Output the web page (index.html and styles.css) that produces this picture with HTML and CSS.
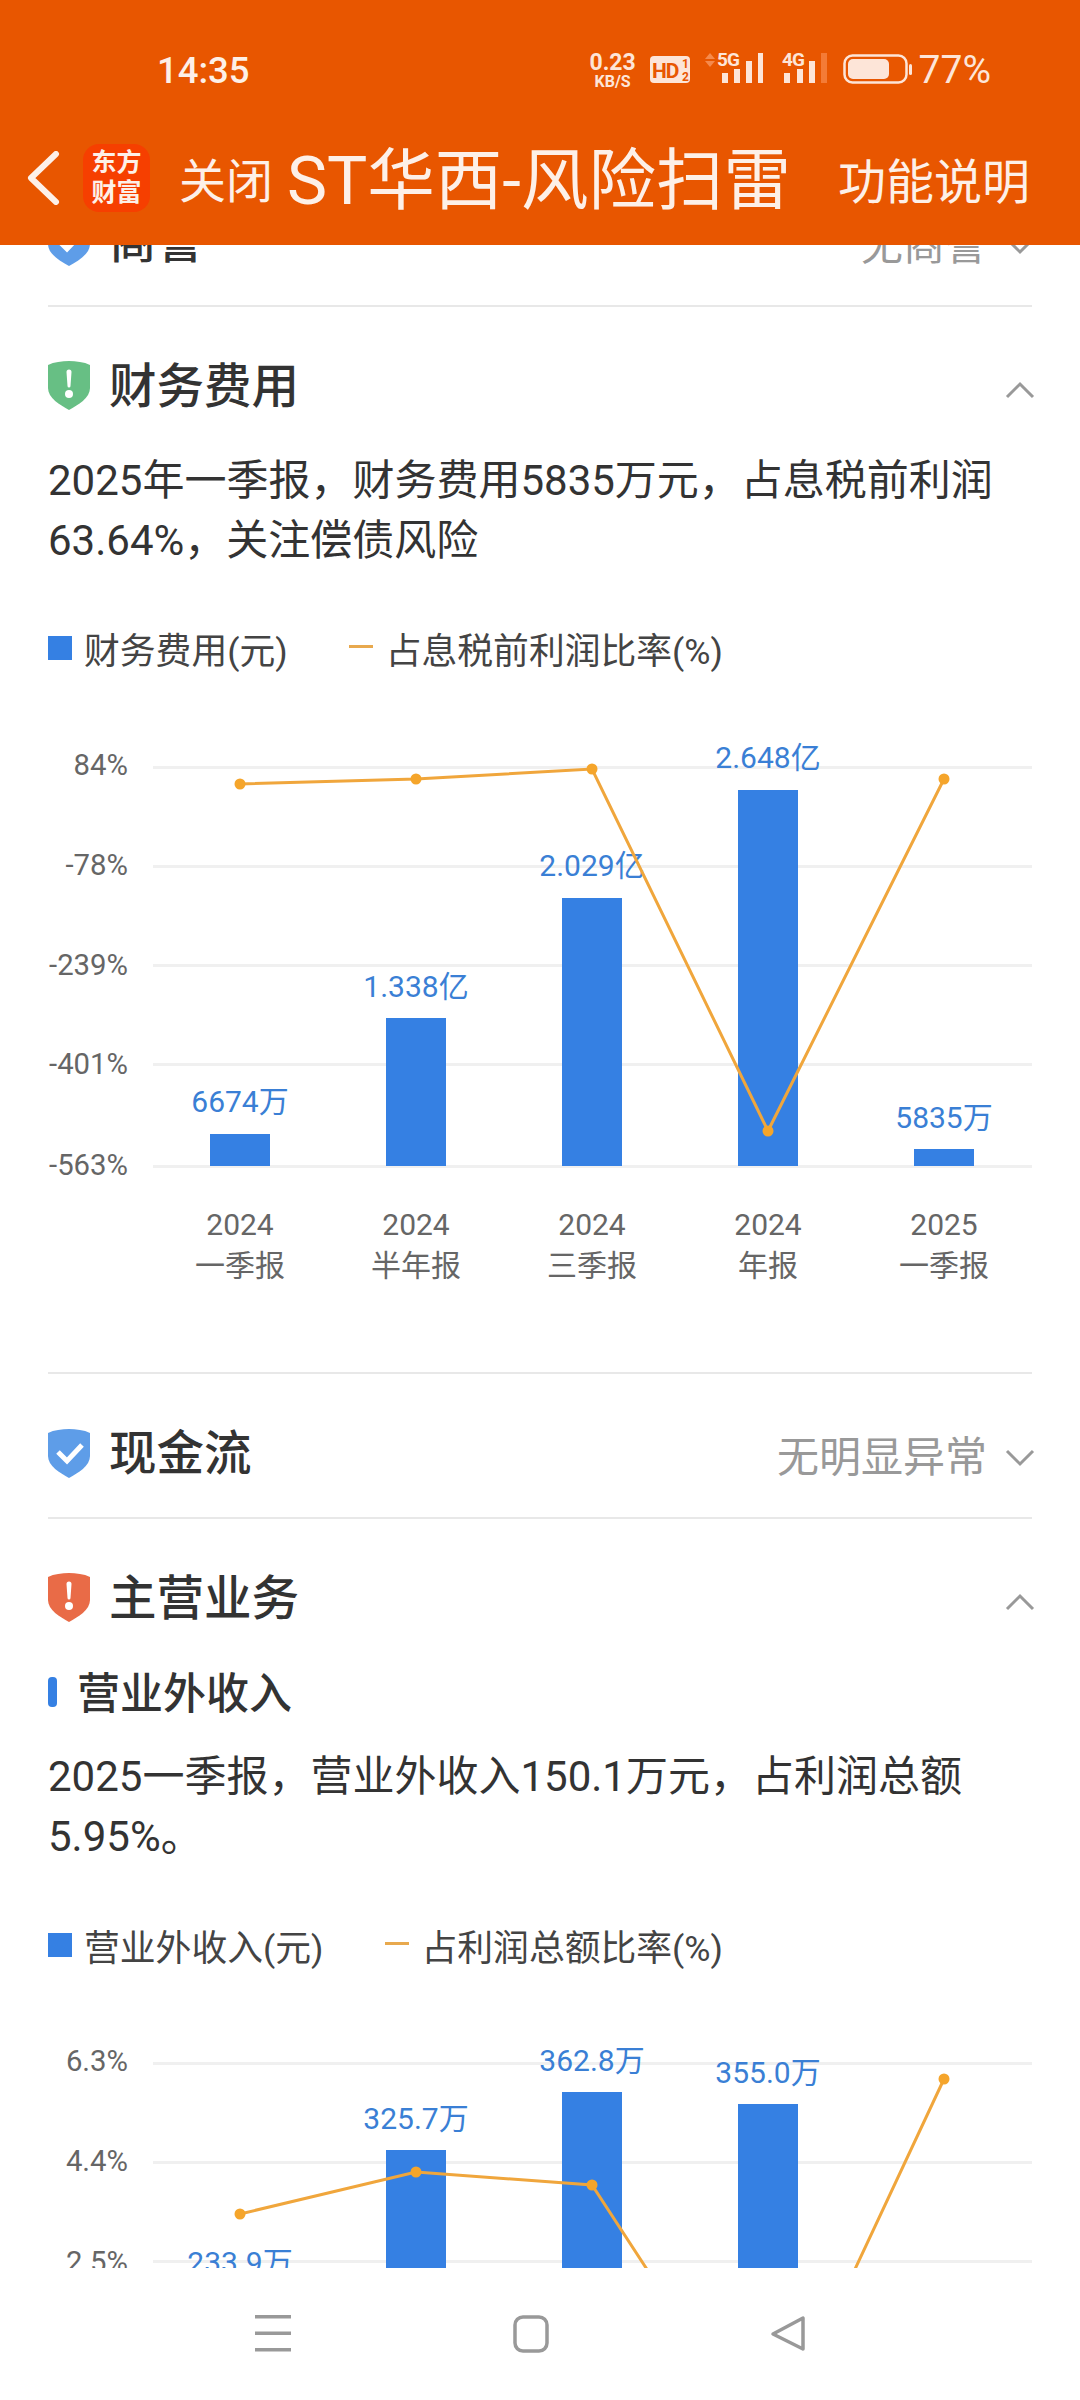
FILE: index.html
```html
<!DOCTYPE html>
<html lang="zh-CN">
<head>
    <meta charset="UTF-8">
    <meta name="viewport" content="width=device-width, initial-scale=1.0">
    <title>ST华西-风险扫雷</title>
    <link rel="stylesheet" href="styles.css">
</head>
<body>
    <div class="screen">
        <header class="topbar">
            <div class="status-bar">
                <span class="clock">14:35</span>
                <div class="status-icons">
                    <div class="net-speed"><span class="net-value">0.23</span><span class="net-unit">KB/S</span></div>
                    <svg class="hd-badge" width="40" height="40" viewBox="0 0 40 40">
                        <rect x="0" y="6" width="40" height="27" rx="4" fill="#fde5d8"/>
                        <text x="2" y="28" class="hd-text">HD</text>
                        <text x="32" y="18" class="hd-small">1</text>
                        <text x="32" y="31" class="hd-small">2</text>
                    </svg>
                    <svg class="signal-5g" width="58" height="40" viewBox="0 0 58 40">
                        <polygon points="5,3 10,9 0,9" fill="#f58a4d"/>
                        <polygon points="0,11 10,11 5,17" fill="#f58a4d"/>
                        <text x="12" y="16" class="sig-text">5G</text>
                        <rect x="17" y="23" width="6" height="10" fill="#fde5d8"/>
                        <rect x="29" y="19" width="6" height="14" fill="#fde5d8"/>
                        <rect x="41" y="11" width="6" height="22" fill="#fde5d8"/>
                        <rect x="53" y="3" width="5" height="30" fill="#fde5d8"/>
                    </svg>
                    <svg class="signal-4g" width="45" height="40" viewBox="0 0 45 40">
                        <text x="0" y="16" class="sig-text">4G</text>
                        <rect x="2" y="23" width="6" height="10" fill="#fde5d8"/>
                        <rect x="15" y="19" width="6" height="14" fill="#fde5d8"/>
                        <rect x="27" y="11" width="6" height="22" fill="#fde5d8"/>
                        <rect x="39" y="3" width="6" height="30" fill="#f47b36"/>
                    </svg>
                    <svg class="battery" width="69" height="40" viewBox="0 0 69 40">
                        <rect x="1.5" y="5.5" width="62" height="27" rx="8" fill="none" stroke="#fde5d8" stroke-width="2.5"/>
                        <rect x="5" y="9" width="41" height="20" rx="5" fill="#fde5d8"/>
                        <rect x="66" y="14" width="3" height="11" rx="1.5" fill="#fde5d8"/>
                    </svg>
                    <span class="battery-pct">77%</span>
                </div>
            </div>
            <nav class="app-nav">
                <svg class="back-icon" width="34" height="54" viewBox="0 0 34 54">
                    <polyline points="30,3 5,27 30,51" fill="none" stroke="#fdf0e8" stroke-width="6" stroke-linecap="round" stroke-linejoin="round"/>
                </svg>
                <div class="app-logo"><span>东方</span><span>财富</span></div>
                <span class="close-link">关闭</span>
                <h1 class="page-title">ST华西-风险扫雷</h1>
                <span class="help-link">功能说明</span>
            </nav>
        </header>

        <main class="content">
            <div class="scroll-body">
                <section class="row">
                    <div class="row-title">
                        <svg class="shield" width="42" height="49" viewBox="0 0 42 49">
                            <path class="shield-blue" d="M21 0C28 0 36 1 42 4V27C42 37 30 44 21 49C12 44 0 37 0 27V4C6 1 14 0 21 0Z"/>
                            <polyline points="10,23 19,32 34,16" class="shield-check"/>
                        </svg>
                        <span class="heading">商誉</span>
                    </div>
                    <div class="row-status">
                        <span>无商誉</span>
                        <svg class="chevron" width="30" height="18" viewBox="0 0 30 18"><polyline points="2,2 15,15 28,2"/></svg>
                    </div>
                </section>

                <section class="block">
                    <div class="block-head">
                        <div class="row-title">
                            <svg class="shield" width="42" height="49" viewBox="0 0 42 49">
                                <path class="shield-green" d="M21 0C28 0 36 1 42 4V27C42 37 30 44 21 49C12 44 0 37 0 27V4C6 1 14 0 21 0Z"/>
                                <path class="shield-mark" d="M18.5 11a2.5 2.5 0 0 1 5 0L22.5 25a1.5 1.5 0 0 1-3 0Z"/>
                                <circle class="shield-mark" cx="21" cy="33" r="4"/>
                            </svg>
                            <span class="heading">财务费用</span>
                        </div>
                        <svg class="chevron" width="30" height="18" viewBox="0 0 30 18"><polyline points="2,16 15,3 28,16"/></svg>
                    </div>
                    <p class="summary">2025年一季报，财务费用5835万元，占息税前利润<br>63.64%，关注偿债风险</p>
                    <div class="legend">
                        <span class="legend-box"></span>
                        <span class="legend-label">财务费用(元)</span>
                        <span class="legend-dash"></span>
                        <span class="legend-label">占息税前利润比率(%)</span>
                    </div>
                    <svg class="chart chart-full" width="984" height="672" viewBox="0 0 984 672">
                        <g class="grid">
                            <rect x="105" y="66" width="879" height="3"/>
                            <rect x="105" y="165" width="879" height="3"/>
                            <rect x="105" y="264" width="879" height="3"/>
                            <rect x="105" y="363" width="879" height="3"/>
                            <rect x="105" y="465" width="879" height="3"/>
                        </g>
                        <g class="axis-label">
                            <text x="80" y="75">84%</text>
                            <text x="80" y="175">-78%</text>
                            <text x="80" y="275">-239%</text>
                            <text x="80" y="374">-401%</text>
                            <text x="80" y="475">-563%</text>
                        </g>
                        <g class="bars">
                            <rect x="162" y="434" width="60" height="32"/>
                            <rect x="338" y="318" width="60" height="148"/>
                            <rect x="514" y="198" width="60" height="268"/>
                            <rect x="690" y="90" width="60" height="376"/>
                            <rect x="866" y="449" width="60" height="17"/>
                        </g>
                        <g class="bar-label">
                            <text x="192" y="412">6674万</text>
                            <text x="368" y="297">1.338亿</text>
                            <text x="544" y="176">2.029亿</text>
                            <text x="720" y="68">2.648亿</text>
                            <text x="896" y="428">5835万</text>
                        </g>
                        <polyline class="rate-line" points="192,84 368,79 544,69 720,431 896,79"/>
                        <g class="rate-dot">
                            <circle cx="192" cy="84" r="5.5"/>
                            <circle cx="368" cy="79" r="5.5"/>
                            <circle cx="544" cy="69" r="5.5"/>
                            <circle cx="720" cy="431" r="5.5"/>
                            <circle cx="896" cy="79" r="5.5"/>
                        </g>
                        <g class="period-label">
                            <text x="192" y="535">2024</text>
                            <text x="192" y="576">一季报</text>
                            <text x="368" y="535">2024</text>
                            <text x="368" y="576">半年报</text>
                            <text x="544" y="535">2024</text>
                            <text x="544" y="576">三季报</text>
                            <text x="720" y="535">2024</text>
                            <text x="720" y="576">年报</text>
                            <text x="896" y="535">2025</text>
                            <text x="896" y="576">一季报</text>
                        </g>
                    </svg>
                </section>

                <section class="row">
                    <div class="row-title">
                        <svg class="shield" width="42" height="49" viewBox="0 0 42 49">
                            <path class="shield-blue" d="M21 0C28 0 36 1 42 4V27C42 37 30 44 21 49C12 44 0 37 0 27V4C6 1 14 0 21 0Z"/>
                            <polyline points="10,23 19,32 34,16" class="shield-check"/>
                        </svg>
                        <span class="heading">现金流</span>
                    </div>
                    <div class="row-status">
                        <span>无明显异常</span>
                        <svg class="chevron" width="30" height="18" viewBox="0 0 30 18"><polyline points="2,2 15,15 28,2"/></svg>
                    </div>
                </section>

                <section class="block">
                    <div class="block-head block-head-tight">
                        <div class="row-title">
                            <svg class="shield" width="42" height="49" viewBox="0 0 42 49">
                                <path class="shield-red" d="M21 0C28 0 36 1 42 4V27C42 37 30 44 21 49C12 44 0 37 0 27V4C6 1 14 0 21 0Z"/>
                                <path class="shield-mark" d="M18.5 11a2.5 2.5 0 0 1 5 0L22.5 25a1.5 1.5 0 0 1-3 0Z"/>
                                <circle class="shield-mark" cx="21" cy="33" r="4"/>
                            </svg>
                            <span class="heading">主营业务</span>
                        </div>
                        <svg class="chevron" width="30" height="18" viewBox="0 0 30 18"><polyline points="2,16 15,3 28,16"/></svg>
                    </div>
                    <div class="sub-head">
                        <span class="sub-mark"></span>
                        <span class="sub-title">营业外收入</span>
                    </div>
                    <p class="summary summary-tight">2025一季报，营业外收入150.1万元，占利润总额<br>5.95%。</p>
                    <div class="legend legend-wide">
                        <span class="legend-box"></span>
                        <span class="legend-label">营业外收入(元)</span>
                        <span class="legend-dash"></span>
                        <span class="legend-label">占利润总额比率(%)</span>
                    </div>
                    <svg class="chart" width="984" height="500" viewBox="0 0 984 500">
                        <g class="grid">
                            <rect x="105" y="65" width="879" height="3"/>
                            <rect x="105" y="164" width="879" height="3"/>
                            <rect x="105" y="263" width="879" height="3"/>
                        </g>
                        <g class="axis-label">
                            <text x="80" y="74">6.3%</text>
                            <text x="80" y="174">4.4%</text>
                            <text x="80" y="275">2.5%</text>
                        </g>
                        <g class="bars">
                            <rect x="162" y="298" width="60" height="200"/>
                            <rect x="338" y="153" width="60" height="345"/>
                            <rect x="514" y="95" width="60" height="403"/>
                            <rect x="690" y="107" width="60" height="391"/>
                        </g>
                        <g class="bar-label">
                            <text x="192" y="276">233.9万</text>
                            <text x="368" y="132">325.7万</text>
                            <text x="544" y="74">362.8万</text>
                            <text x="720" y="86">355.0万</text>
                        </g>
                        <polyline class="rate-line" points="192,217 368,175 544,188 720,458 896,82"/>
                        <g class="rate-dot">
                            <circle cx="192" cy="217" r="5.5"/>
                            <circle cx="368" cy="175" r="5.5"/>
                            <circle cx="544" cy="188" r="5.5"/>
                            <circle cx="896" cy="82" r="5.5"/>
                        </g>
                    </svg>
                </section>
            </div>
        </main>

        <footer class="sys-nav">
            <svg width="36" height="38" viewBox="0 0 36 38">
                <rect x="0" y="0" width="36" height="3.5" fill="#999"/>
                <rect x="0" y="16.5" width="36" height="3.5" fill="#999"/>
                <rect x="0" y="33" width="36" height="3.5" fill="#999"/>
            </svg>
            <svg width="36" height="38" viewBox="0 0 36 38">
                <rect x="2" y="2" width="32" height="34" rx="8" fill="none" stroke="#999" stroke-width="3.5"/>
            </svg>
            <svg width="36" height="38" viewBox="0 0 36 38">
                <path d="M33 3V34L3 19Z" fill="none" stroke="#999" stroke-width="3.5" stroke-linejoin="round"/>
            </svg>
        </footer>
    </div>
</body>
</html>
```

FILE: styles.css
```css
* {
    box-sizing: border-box;
}

body {
    margin: 0;
    background-color: #fff;
    font-family: Roboto, "Noto Sans CJK SC", sans-serif;
    color: #333;
}

.screen {
    width: 1080px;
    height: 2400px;
    display: flex;
    flex-direction: column;
    overflow: hidden;
}

/* orange top area */
.topbar {
    height: 245px;
    flex-shrink: 0;
    background-color: #e85600;
    color: #fdf0e8;
    position: relative;
    z-index: 2;
}

.status-bar {
    height: 140px;
    padding: 0 89px 0 157px;
    display: flex;
    align-items: center;
    justify-content: space-between;
}

.clock {
    font-size: 36.5px;
    font-weight: 500;
}

.status-icons {
    display: flex;
    align-items: center;
}

.net-speed {
    width: 48px;
    margin-right: 13px;
    display: flex;
    flex-direction: column;
    align-items: center;
    color: #fde5d8;
    font-weight: 700;
}

.net-value {
    font-size: 23px;
    line-height: 22px;
}

.net-unit {
    font-size: 16px;
    line-height: 15px;
}

.hd-badge {
    margin-right: 15px;
}

.hd-text {
    font-size: 21px;
    font-weight: 700;
    fill: #e85600;
    letter-spacing: -1px;
}

.hd-small {
    font-size: 12px;
    font-weight: 700;
    fill: #e85600;
}

.signal-5g {
    margin-right: 19px;
}

.signal-4g {
    margin-right: 16px;
}

.sig-text {
    font-size: 19px;
    font-weight: 700;
    fill: #fde5d8;
    letter-spacing: -1px;
}

.battery {
    margin-right: 7px;
}

.battery-pct {
    font-size: 39px;
    color: #fde5d8;
}

.app-nav {
    height: 75px;
    display: flex;
    align-items: center;
}

.back-icon {
    margin-left: 26px;
}

.app-logo {
    width: 67px;
    height: 68px;
    margin-left: 23px;
    border-radius: 16px;
    background-color: #f63f00;
    display: flex;
    flex-direction: column;
    align-items: center;
    justify-content: center;
    font-size: 25px;
    line-height: 30px;
    font-weight: 700;
}

.close-link {
    margin-left: 29px;
    font-size: 47px;
}

.page-title {
    margin: 6px 0 0 14px;
    font-size: 67.5px;
    font-weight: 400;
    line-height: 75px;
}

.help-link {
    margin-left: auto;
    padding-right: 50px;
    font-size: 48px;
}

/* scrolled page, the first row sits partly under the top area */
.content {
    flex: 1;
    min-height: 0;
    overflow: hidden;
    padding: 0 48px;
}

.scroll-body {
    margin-top: -83px;
}

.row {
    height: 145px;
    padding-top: 16px;
    display: flex;
    align-items: center;
    justify-content: space-between;
    border-bottom: 2px solid #e8e8e8;
}

.row-title {
    display: flex;
    align-items: center;
}

.heading {
    margin-left: 19px;
    font-size: 47.5px;
    font-weight: 500;
    line-height: 64px;
}

.block-head .heading {
    margin-top: 4px;
}

.row-status {
    display: flex;
    align-items: center;
    font-size: 42px;
    color: #999;
}

.chevron {
    margin: 9px -3px 0 18px;
}

.chevron polyline {
    fill: none;
    stroke: #999;
    stroke-width: 3;
}

.shield-blue {
    fill: #5e9de8;
}

.shield-green {
    fill: #67bf84;
}

.shield-red {
    fill: #e96b47;
}

.shield-mark {
    fill: #fff;
}

.shield-check {
    fill: none;
    stroke: #fff;
    stroke-width: 5;
}

.block {
    border-bottom: 2px solid #e8e8e8;
}

.block-head {
    height: 144px;
    padding-top: 46px;
    padding-bottom: 34px;
    display: flex;
    align-items: center;
    justify-content: space-between;
}

.block-head-tight {
    height: 148px;
    padding-bottom: 38px;
}

.summary {
    margin: 0;
    font-size: 42px;
    line-height: 60px;
    color: #333;
}

.summary-tight {
    margin-top: 30px;
}

.legend {
    height: 40px;
    margin-top: 57px;
    display: flex;
    align-items: center;
}

.legend-wide {
    margin-top: 58px;
}

.legend-box {
    width: 24px;
    height: 24px;
    margin-right: 12px;
    background-color: #3580e3;
}

.legend-label {
    font-size: 35.8px;
    color: #444;
}

.legend-dash {
    width: 24px;
    height: 3px;
    margin: -4px 13px 0 61px;
    background-color: #e8a94e;
}

.sub-head {
    height: 50px;
    display: flex;
    align-items: center;
}

.sub-mark {
    width: 9px;
    height: 30px;
    margin-right: 20px;
    border-radius: 4px;
    background-color: #3580e3;
}

.sub-title {
    margin-top: -4px;
    font-size: 43px;
    font-weight: 500;
}

.chart {
    display: block;
    margin-top: 32px;
}

.grid rect {
    fill: #f0f0f0;
}

.bars rect {
    fill: #3580e3;
}

.axis-label text {
    font-size: 29.3px;
    fill: #666;
    text-anchor: end;
}

.bar-label text {
    font-size: 30px;
    fill: #3a7fd5;
    text-anchor: middle;
}

.period-label text {
    font-size: 30px;
    fill: #666;
    text-anchor: middle;
}

.rate-line {
    fill: none;
    stroke: #f0a63c;
    stroke-width: 3;
}

.rate-dot circle {
    fill: #f5a52b;
}

/* phone buttons */
.sys-nav {
    height: 132px;
    flex-shrink: 0;
    background-color: #fff;
    padding: 0 274px 0 255px;
    display: flex;
    align-items: center;
    justify-content: space-between;
}
```
